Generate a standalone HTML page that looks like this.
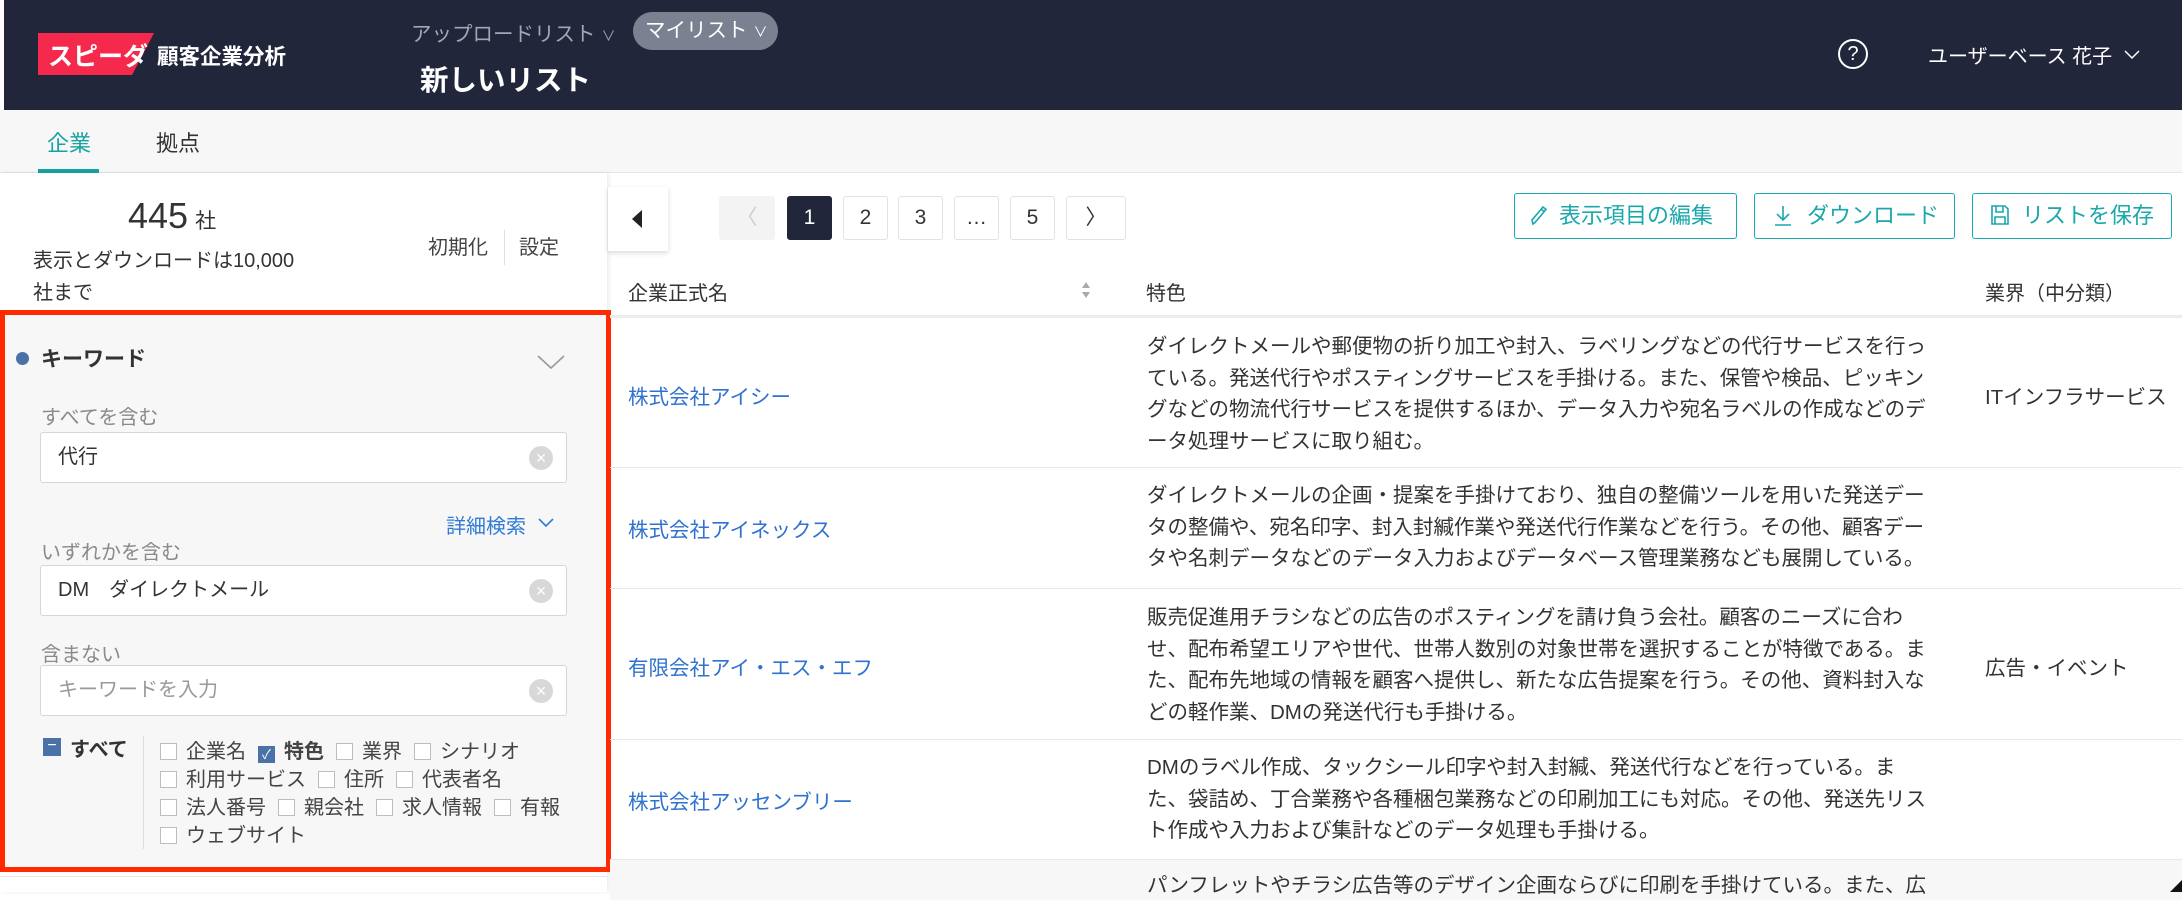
<!DOCTYPE html>
<html><head><meta charset="utf-8"><style>
*{box-sizing:border-box;margin:0;padding:0}
body{width:2182px;height:892px;overflow:hidden;position:relative;background:#fff;font-family:"Liberation Sans","Noto Sans CJK JP",sans-serif;color:#333}
.a{position:absolute;white-space:nowrap}
.hdr{left:0;top:0;width:2182px;height:110px;background:#22263b;border-left:4px solid #fff}
.tabs{left:0;top:110px;width:2182px;height:63px;background:#f7f7f7;border-bottom:1px solid #e6e6e6}
.inp{position:absolute;left:40px;width:527px;height:51px;background:#fff;border:1px solid #d6d6d6;border-radius:3px;font-size:20px;line-height:49px;padding-left:17px}
.clr{position:absolute;right:13px;top:13px;width:24px;height:24px;border-radius:50%;background:#d8d8d8;color:#fff;font-size:18px;line-height:24px;text-align:center}
.lbl{position:absolute;left:41px;font-size:20px;color:#8a8a8a;line-height:24px}
.cbrow{position:absolute;left:160px;font-size:20px;line-height:28px;color:#444}
.cb{display:inline-block;width:17px;height:17px;border:1px solid #bdbdbd;background:#fff;vertical-align:-2px;margin-right:9px}
.cbi{margin-right:12px}
.pg{position:absolute;top:196px;height:44px;width:45px;border:1px solid #e2e2e2;border-radius:3px;background:#fff;font-size:21px;line-height:42px;text-align:center;color:#333}
.btn{position:absolute;top:193px;height:46px;border:1.5px solid #1aa8ab;border-radius:3px;color:#1aa8ab;font-size:22px;line-height:43px;padding-left:14px;background:#fff}
.row{position:absolute;left:610px;width:1572px;border-bottom:1.5px solid #e8e8e8}
.nm{position:absolute;left:18px;color:#2f72cf;font-size:20.5px}
.ds{position:absolute;left:537px;font-size:20.5px;line-height:31.5px;color:#333}
.ind{position:absolute;left:1375px;font-size:20.5px;color:#333}
</style></head><body>
<div class="a hdr"></div>
<svg class="a" style="left:38px;top:33px" width="116" height="43"><polygon points="0,0 116,0 94,42 0,42" fill="#f4294b"/></svg>
<div class="a" style="left:48px;top:37px;font-size:25px;font-weight:bold;color:#fff">スピーダ</div>
<div class="a" style="left:157px;top:40px;font-size:21.5px;font-weight:bold;color:#fff">顧客企業分析</div>
<div class="a" style="left:411px;top:17px;font-size:20.5px;color:#a3a7b4">アップロードリスト<span style="font-size:14px;margin-left:6px">∨</span></div>
<div class="a" style="left:633px;top:12px;width:145px;height:38px;border-radius:19px;background:#7c8191;color:#fff;font-size:20.5px;line-height:38px;padding-left:12px">マイリスト<span style="font-size:14px;margin-left:6px">∨</span></div>
<div class="a" style="left:420px;top:58px;font-size:28.5px;font-weight:bold;color:#fff">新しいリスト</div>
<div class="a" style="left:1838px;top:39px;width:30px;height:30px;border:2px solid #fff;border-radius:50%;color:#fff;font-size:20px;line-height:26px;text-align:center">?</div>
<div class="a" style="left:1928px;top:40px;font-size:20px;color:#fff">ユーザーベース 花子</div>
<svg class="a" style="left:2124px;top:50px" width="16" height="10"><path d="M1 1 L8 8 L15 1" stroke="#fff" stroke-width="1.5" fill="none"/></svg>

<div class="a tabs"></div>
<div class="a" style="left:47px;top:126px;font-size:22px;color:#17a2a2">企業</div>
<div class="a" style="left:38px;top:169px;width:61px;height:4px;background:#17a2a2"></div>
<div class="a" style="left:156px;top:126px;font-size:22px;color:#333">拠点</div>

<div class="a" style="left:0;top:173px;width:607px;height:719px;background:#fff;box-shadow:2px 0 4px rgba(0,0,0,.08)"></div>
<div class="a" style="left:128px;top:195px;font-size:36px;color:#333">445<span style="font-size:21px;margin-left:7px">社</span></div>
<div class="a" style="left:33px;top:245px;font-size:20px;line-height:32px;color:#333">表示とダウンロードは10,000<br>社まで</div>
<div class="a" style="left:428px;top:231px;font-size:20px;color:#444">初期化</div>
<div class="a" style="left:504px;top:230px;width:1px;height:35px;background:#e0e0e0"></div>
<div class="a" style="left:519px;top:231px;font-size:20px;color:#444">設定</div>

<div class="a" style="left:0;top:310px;width:611px;height:562px;background:#f7f7f7;border:5px solid #ff2a00">
 <div style="position:absolute;left:11px;top:37px;width:13px;height:13px;border-radius:50%;background:#4b72a8"></div>
 <div style="position:absolute;left:36px;top:28px;font-size:21px;font-weight:bold;color:#333">キーワード</div>
 <svg style="position:absolute;left:532px;top:40px" width="28" height="15"><path d="M1 1 L14 13 L27 1" stroke="#999" stroke-width="1.6" fill="none"/></svg>
 <div class="lbl" style="left:36px;top:91px">すべてを含む</div>
 <div class="inp" style="left:35px;top:117px">代行<div class="clr">×</div></div>
 <div style="position:absolute;left:441px;top:195px;font-size:20px;color:#2f7bd5">詳細検索</div>
 <svg style="position:absolute;left:533px;top:203px" width="16" height="10"><path d="M1 1 L8 8 L15 1" stroke="#2f7bd5" stroke-width="1.6" fill="none"/></svg>
 <div class="lbl" style="left:36px;top:226px">いずれかを含む</div>
 <div class="inp" style="left:35px;top:250px">DM　ダイレクトメール<div class="clr">×</div></div>
 <div class="lbl" style="left:36px;top:328px">含まない</div>
 <div class="inp" style="left:35px;top:350px;color:#999">キーワードを入力<div class="clr">×</div></div>
 <div style="position:absolute;left:38px;top:423px;width:18px;height:18px;background:#4b72a8;color:#fff;font-size:16px;line-height:16px;text-align:center">−</div>
 <div style="position:absolute;left:65px;top:418px;font-size:20px;font-weight:bold;color:#333">すべて</div>
 <div style="position:absolute;left:138px;top:421px;width:1px;height:113px;background:#ddd"></div>
</div>
<div class="cbrow" style="top:738px"><span class="cb"></span><span class="cbi">企業名</span><span class="cb" style="background:#4b72a8;border-color:#4b72a8;color:#fff;font-size:13px;line-height:15px;text-align:center;vertical-align:-1px">✓</span><b class="cbi">特色</b><span class="cb"></span><span class="cbi">業界</span><span class="cb"></span><span>シナリオ</span></div>
<div class="cbrow" style="top:766px"><span class="cb"></span><span class="cbi">利用サービス</span><span class="cb"></span><span class="cbi">住所</span><span class="cb"></span><span>代表者名</span></div>
<div class="cbrow" style="top:794px"><span class="cb"></span><span class="cbi">法人番号</span><span class="cb"></span><span class="cbi">親会社</span><span class="cb"></span><span class="cbi">求人情報</span><span class="cb"></span><span>有報</span></div>
<div class="cbrow" style="top:822px"><span class="cb"></span><span>ウェブサイト</span></div>
<div class="a" style="left:0;top:876px;width:607px;height:1px;background:#e6e6e6"></div>

<div class="a" style="left:608px;top:187px;width:60px;height:64px;background:#fff;box-shadow:0 2px 5px rgba(0,0,0,.15)"></div>
<svg class="a" style="left:632px;top:210px" width="10" height="18"><polygon points="10,0 10,18 0,9" fill="#222"/></svg>
<div class="pg" style="left:719px;width:56px;background:#f3f3f3;border-color:#f3f3f3;color:#ccc">〈</div>
<div class="pg" style="left:787px;background:#22263b;border-color:#22263b;color:#fff">1</div>
<div class="pg" style="left:843px">2</div>
<div class="pg" style="left:898px">3</div>
<div class="pg" style="left:954px">…</div>
<div class="pg" style="left:1010px">5</div>
<div class="pg" style="left:1066px;width:60px">〉</div>

<div class="btn" style="left:1514px;width:223px"><svg width="20" height="22" style="vertical-align:-3px;margin-right:10px"><path d="M4 20 L3 16 L14 3 L17 5.5 L6 18.5 Z M12 5 L15 7.5" stroke="#1aa8ab" stroke-width="1.6" fill="none"/></svg>表示項目の編集</div>
<div class="btn" style="left:1754px;width:201px;padding-left:18px"><svg width="20" height="22" style="vertical-align:-3px;margin-right:14px"><path d="M10 2 V15 M4 10 L10 16 L16 10 M2 21 H18" stroke="#1aa8ab" stroke-width="1.6" fill="none"/></svg>ダウンロード</div>
<div class="btn" style="left:1972px;width:200px;padding-left:17px"><svg width="20" height="22" style="vertical-align:-3px;margin-right:12px"><path d="M2 2 H15 L18 5 V20 H2 Z M6 2 V8 H13 V2 M5 20 V13 H15 V20" stroke="#1aa8ab" stroke-width="1.6" fill="none"/></svg>リストを保存</div>

<div class="a" style="left:628px;top:277px;font-size:20px;color:#333">企業正式名</div>
<svg class="a" style="left:1081px;top:281px" width="10" height="18"><polygon points="5,1 9,7 1,7" fill="#aaa"/><polygon points="5,17 9,11 1,11" fill="#aaa"/></svg>
<div class="a" style="left:1146px;top:277px;font-size:20px;color:#333">特色</div>
<div class="a" style="left:1985px;top:277px;font-size:20px;color:#333">業界（中分類）</div>
<div class="a" style="left:610px;top:315px;width:1572px;height:3px;background:#ececec"></div>

<div class="row" style="top:318px;height:150px">
 <div class="nm" style="top:62px">株式会社アイシー</div>
 <div class="ds" style="top:13px">ダイレクトメールや郵便物の折り加工や封入、ラベリングなどの代行サービスを行っ<br>ている。発送代行やポスティングサービスを手掛ける。また、保管や検品、ピッキン<br>グなどの物流代行サービスを提供するほか、データ入力や宛名ラベルの作成などのデ<br>ータ処理サービスに取り組む。</div>
 <div class="ind" style="top:62px">ITインフラサービス</div>
</div>
<div class="row" style="top:468px;height:121px">
 <div class="nm" style="top:45px">株式会社アイネックス</div>
 <div class="ds" style="top:12px">ダイレクトメールの企画・提案を手掛けており、独自の整備ツールを用いた発送デー<br>タの整備や、宛名印字、封入封緘作業や発送代行作業などを行う。その他、顧客デー<br>タや名刺データなどのデータ入力およびデータベース管理業務なども展開している。</div>
</div>
<div class="row" style="top:589px;height:151px">
 <div class="nm" style="top:62px">有限会社アイ・エス・エフ</div>
 <div class="ds" style="top:13px">販売促進用チラシなどの広告のポスティングを請け負う会社。顧客のニーズに合わ<br>せ、配布希望エリアや世代、世帯人数別の対象世帯を選択することが特徴である。ま<br>た、配布先地域の情報を顧客へ提供し、新たな広告提案を行う。その他、資料封入な<br>どの軽作業、DMの発送代行も手掛ける。</div>
 <div class="ind" style="top:62px">広告・イベント</div>
</div>
<div class="row" style="top:740px;height:120px">
 <div class="nm" style="top:45px">株式会社アッセンブリー</div>
 <div class="ds" style="top:12px">DMのラベル作成、タックシール印字や封入封緘、発送代行などを行っている。ま<br>た、袋詰め、丁合業務や各種梱包業務などの印刷加工にも対応。その他、発送先リス<br>ト作成や入力および集計などのデータ処理も手掛ける。</div>
</div>
<div class="row" style="top:860px;height:40px;background:#f7f7f7;border:none">
 <div class="ds" style="top:10px">パンフレットやチラシ広告等のデザイン企画ならびに印刷を手掛けている。また、広</div>
</div>
<svg class="a" style="left:2170px;top:880px" width="12" height="12"><polygon points="12,0 12,12 0,12" fill="#111"/></svg>
</body></html>
